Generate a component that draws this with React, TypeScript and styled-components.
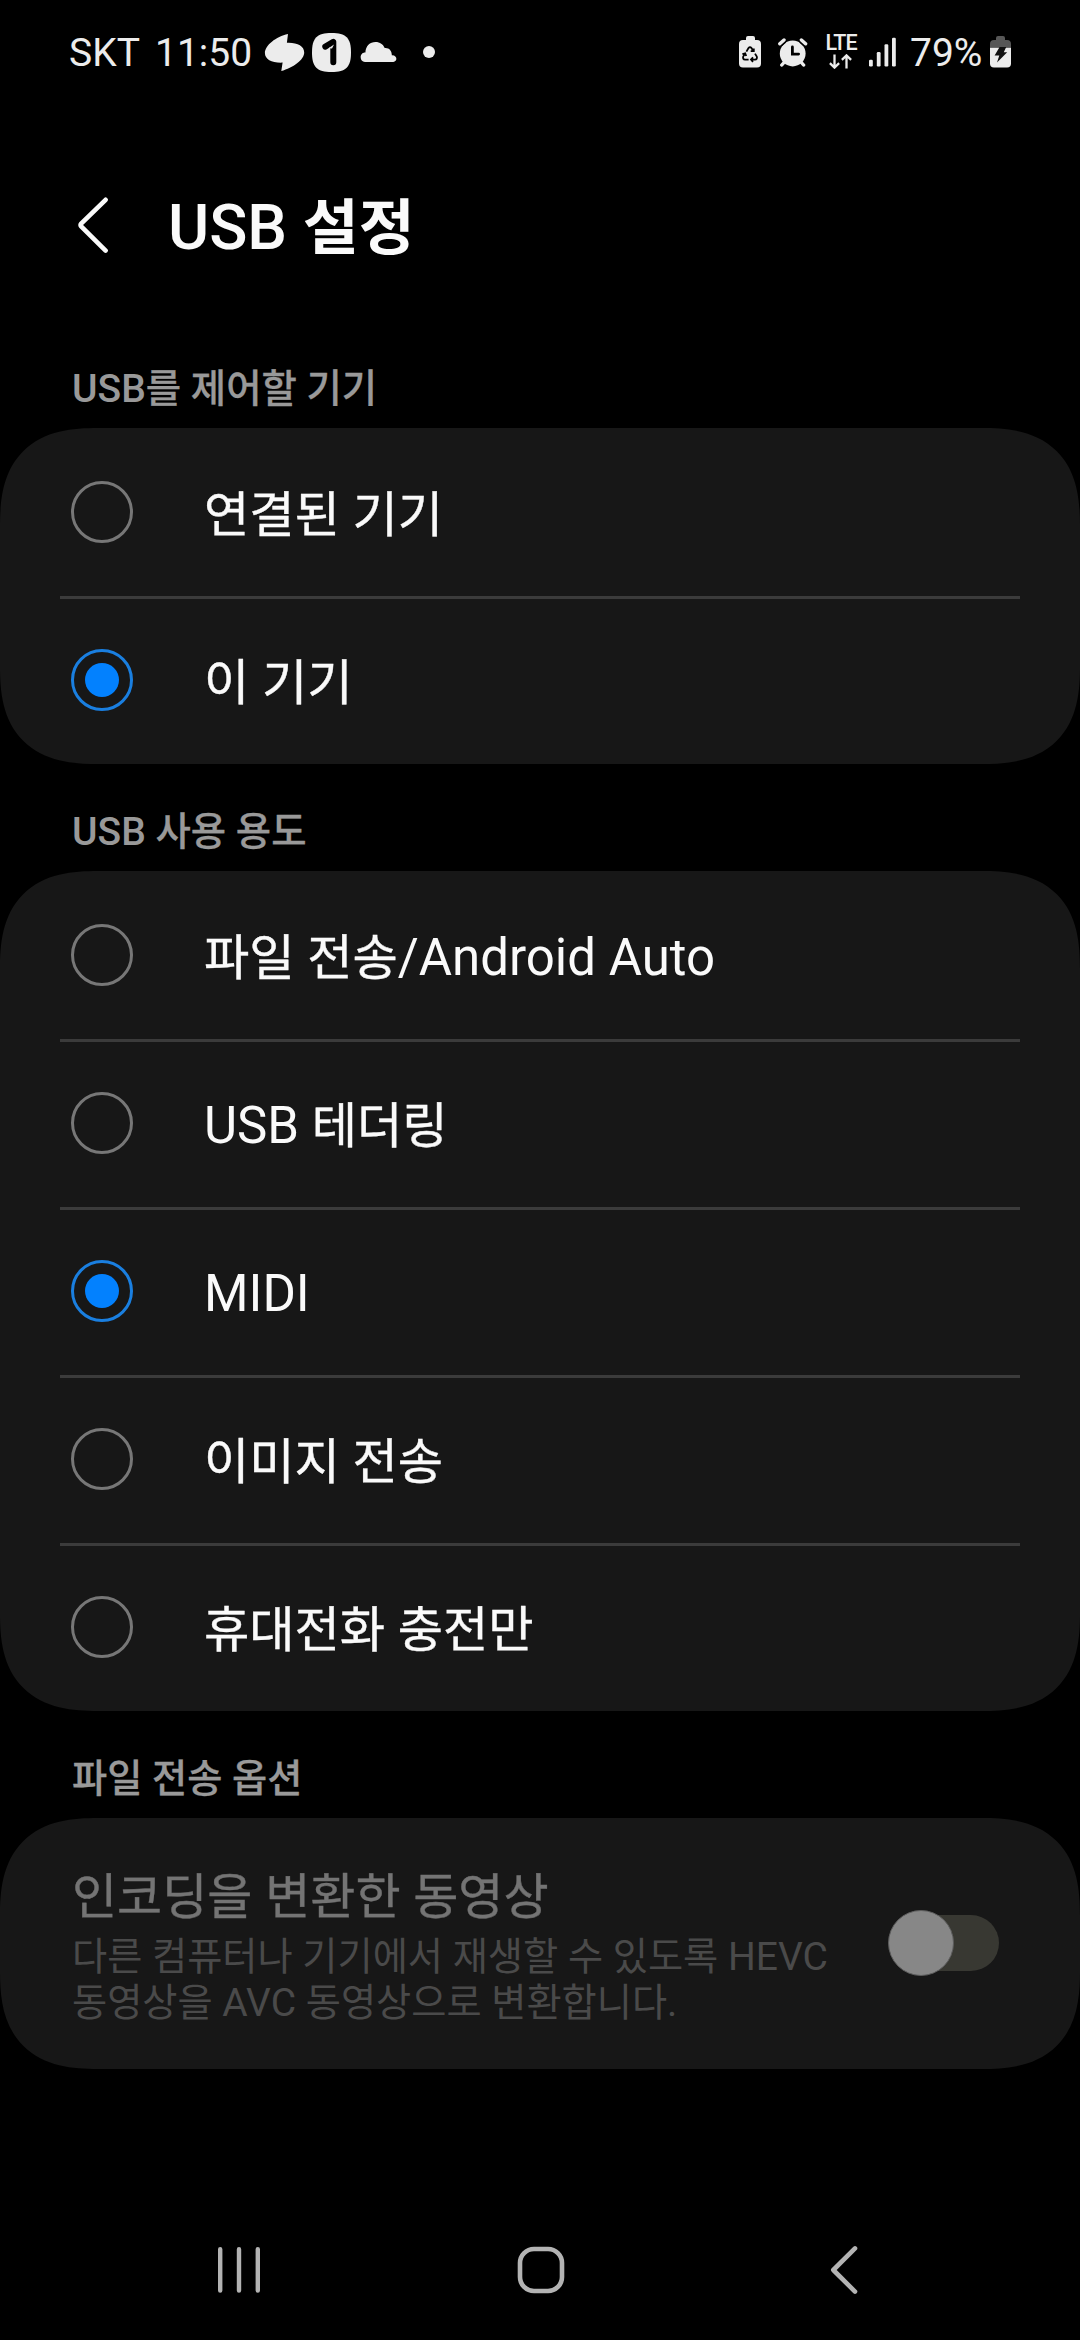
import React, { useState } from 'react';
import styled, { createGlobalStyle, css } from 'styled-components';

const GlobalStyle = createGlobalStyle`
  * { box-sizing: border-box; }
  body {
    margin: 0;
    background: #000;
    font-family: Roboto, "Noto Sans CJK KR", sans-serif;
  }
`;

const Screen = styled.div`
  display: flex;
  flex-direction: column;
  width: 1080px;
  height: 2340px;
  background: #000;
  color: #fafafa;
  overflow: hidden;
`;

const StatusBar = styled.header`
  display: flex;
  justify-content: space-between;
  align-items: center;
  height: 104px;
  padding: 0 69px 0 69px;
  color: #ececec;
  font-size: 39px;
  line-height: 46px;
`;

const StatusGroup = styled.div`
  display: flex;
  align-items: center;
`;

const StatusText = styled.span<{ $left?: number; $width: number }>`
  width: ${(p) => p.$width}px;
  margin-left: ${(p) => p.$left ?? 0}px;
  padding-top: 2px;
  white-space: nowrap;
`;

const StatusIcon = styled.svg<{ $left: number }>`
  display: block;
  flex: none;
  margin-left: ${(p) => p.$left}px;
`;

const Network = styled.div`
  display: flex;
  flex-direction: column;
  align-items: center;
  gap: 3px;
  width: 33px;
  margin-left: 16px;
`;

const NetworkLabel = styled.span`
  font-size: 21.5px;
  font-weight: 500;
  line-height: 16px;
  letter-spacing: -1px;
  margin-right: -1px;
`;

const TitleBar = styled.div`
  display: flex;
  align-items: center;
  gap: 57px;
  height: 242px;
  padding: 0 0 0 77px;
  margin-bottom: -25px;
`;

const IconButton = styled.button`
  display: flex;
  padding: 0;
  border: 0;
  background: none;
  color: inherit;
`;

const Korean = styled.span<{ $scale: number; $weight?: number; $stroke?: number }>`
  font-size: ${(p) => p.$scale}em;
  font-weight: ${(p) => p.$weight ?? 'inherit'};
  line-height: 0;
  -webkit-text-stroke: ${(p) => p.$stroke ?? 0}px currentColor;
`;

const Title = styled.h1`
  margin: 5px 0 0;
  font-size: 63px;
  line-height: 74px;
  font-weight: 500;
`;

const SectionLabel = styled.h2`
  height: 107px;
  margin: 0;
  padding: 45px 72px 0;
  color: #999;
  font-size: 39px;
  line-height: 46px;
  font-weight: 500;
`;

const Card = styled.section`
  border-radius: 78px;
  background: #171717;
  @supports (corner-shape: superellipse(1.4)) {
    border-radius: 98px;
    corner-shape: superellipse(1.36);
  }
`;

const OptionRow = styled.div`
  display: flex;
  align-items: center;
  gap: 71px;
  height: 168px;
  margin: 0 60px;
  padding-left: 11px;
  cursor: pointer;
  & + & {
    box-shadow: inset 0 3px 0 #3b3b3b;
  }
`;

const Radio = styled.span<{ $on: boolean }>`
  display: grid;
  place-items: center;
  width: 62px;
  height: 62px;
  border: 3px solid ${(p) => (p.$on ? '#1a7fe0' : '#777')};
  border-radius: 50%;
  ${(p) =>
    p.$on &&
    css`
      &::after {
        content: '';
        width: 34px;
        height: 34px;
        border-radius: 50%;
        background: #0381fe;
      }
    `}
`;

const OptionText = styled.span`
  padding-top: 5px;
  font-size: 51px;
  line-height: 60px;
`;

const SwitchRow = styled.div`
  display: flex;
  align-items: center;
  justify-content: space-between;
  height: 251px;
  padding: 0 81px 1px 72px;
`;

const SwitchTexts = styled.div`
  display: flex;
  flex-direction: column;
  gap: 7px;
  padding-top: 7px;
`;

const SwitchTitle = styled.span`
  color: #747474;
  font-size: 51px;
  line-height: 60px;
`;

const SwitchSummary = styled.span`
  color: #4a4a4a;
  font-size: 39px;
  line-height: 46px;
  white-space: nowrap;
`;

const Toggle = styled.span`
  display: flex;
  align-items: center;
  width: 108px;
  height: 56px;
  border-radius: 28px;
  background: #383832;
`;

const Thumb = styled.span`
  flex: none;
  width: 66px;
  height: 66px;
  margin-left: -3px;
  border: 1.5px solid #5c5c5c;
  border-radius: 50%;
  background: #878787;
`;

const NavBar = styled.nav`
  display: flex;
  align-items: center;
  justify-content: space-between;
  height: 140px;
  margin-top: auto;
  padding: 0 221px 0 217px;
  color: #b3b3b3;
`;

const HomeButton = styled(IconButton)`
  margin-right: 8px;
`;

interface MixedProps {
  text: string;
  scale?: number;
  weight?: number;
  stroke?: number;
}

/* Hangul is set slightly smaller than the Latin text beside it. */
const Mixed = ({ text, scale = 0.965, weight, stroke }: MixedProps) => (
  <>
    {text.split(/([\uac00-\ud7a3]+)/).map((part, i) =>
      i % 2 ? (
        <Korean key={i} $scale={scale} $weight={weight} $stroke={stroke}>
          {part}
        </Korean>
      ) : (
        part
      ),
    )}
  </>
);

const TalkIcon = () => (
  <StatusIcon $left={11} width="41" height="39" viewBox="0 0 41 39" fill="currentColor">
    <path d="M24 1 22.9 9.7C33 9.2 40.2 12.8 40.2 19.4 40.2 27 29 34.5 17.3 38L18.6 29.6C8 30 .9 26.5.9 20 .9 12.5 12 3.5 24 1Z" />
  </StatusIcon>
);

const OneIcon = () => (
  <StatusIcon $left={7} width="39" height="39" viewBox="0 0 39 39">
    <path
      d="M19.5 0C34 0 39 5 39 19.5S34 39 19.5 39 0 34 0 19.5 5 0 19.5 0Z"
      fill="currentColor"
    />
    <path
      d="M13.3 13.6 21.3 8.8V29.3"
      fill="none"
      stroke="#000"
      strokeWidth="6"
      strokeLinecap="round"
      strokeLinejoin="round"
    />
    <path d="M16.5 15.2 22 11.6 20 15.4Z" fill="currentColor" />
  </StatusIcon>
);

const CloudIcon = () => (
  <StatusIcon $left={9} width="37" height="22" viewBox="0 0 37 22" fill="currentColor">
    <path d="M5 20.9C-.8 20.9-.9 11.4 5.4 11.6 5.6 5 10 1 15.5 1 20 1 23.2 3.4 24.7 7 29 6.5 32 9.6 31.8 14.3 37.6 14 37.6 20.9 33.3 20.9Z" />
  </StatusIcon>
);

const DotIcon = () => (
  <StatusIcon $left={26} width="12" height="12" viewBox="0 0 12 12" fill="currentColor">
    <circle cx="6" cy="6" r="6" />
  </StatusIcon>
);

const RecycleBatteryIcon = () => (
  <StatusIcon $left={0} width="22" height="32" viewBox="0 0 22 32" fill="currentColor">
    <path d="M7 4V2Q7 0 9 0H14Q16 0 16 2V4H18Q22 4 22 8V27.6Q22 31.6 18 31.6H4Q0 31.6 0 27.6V8Q0 4 4 4Z" />
    <g fill="none" stroke="#000" strokeWidth="1.8">
      <path d="M7.4 15.6 9.5 12.1Q11 10.2 12.5 12.1L14.4 15.3M11.7 15.2H14.8V12.4" />
      <path d="M16 17.6 17.8 20.6Q18.6 23.4 15.9 23.6H12.4M14 21.4 12 23.6 14 25.8" />
      <path d="M9.6 23.6H6.1Q3.4 23.4 4.2 20.6L6 17.6M3.4 18.2 6.2 17.3 7.2 20" />
    </g>
  </StatusIcon>
);

const AlarmIcon = () => (
  <StatusIcon $left={17} width="30" height="29" viewBox="0 0 30 29">
    <circle cx="14.7" cy="15.5" r="12.9" fill="currentColor" />
    <g fill="none" stroke="currentColor" strokeWidth="3.4" strokeLinecap="round">
      <path d="M6 24.5 3.8 27M23.4 24.5 25.6 27" />
    </g>
    <path
      d="M1.8 6 6.2 2.1M23.2 2.1 27.6 6"
      fill="none"
      stroke="#000"
      strokeWidth="6.2"
      strokeLinecap="butt"
    />
    <path
      d="M1.8 5.8 6 2M23.4 2 27.6 5.8"
      fill="none"
      stroke="currentColor"
      strokeWidth="3.4"
      strokeLinecap="round"
    />
    <path d="M14.4 9V16.1H20.6" fill="none" stroke="#000" strokeWidth="2.8" strokeLinecap="round" />
  </StatusIcon>
);

const ArrowsIcon = () => (
  <svg width="23" height="15" viewBox="0 0 23 15" fill="none" stroke="currentColor" strokeWidth="2.3">
    <path d="M5.5.5V13.4M.9 9.2 5.5 13.6 10.1 9.2M17.5 14.5V1.6M12.9 5.8 17.5 1.4 22.1 5.8" />
  </svg>
);

const SignalIcon = () => (
  <StatusIcon $left={12} width="28" height="30" viewBox="0 0 28 30" fill="currentColor">
    <rect x="0" y="22.7" width="3.8" height="6.7" rx="1.2" />
    <rect x="7.8" y="15" width="3.8" height="14.4" rx="1.2" />
    <rect x="15.5" y="7.3" width="3.8" height="22.1" rx="1.2" />
    <rect x="23" y="0.7" width="3.8" height="28.7" rx="1.2" />
  </StatusIcon>
);

const ChargingBatteryIcon = () => (
  <StatusIcon $left={7} width="21" height="32" viewBox="0 0 21 32">
    <path
      d="M6 4V2Q6 0 8 0H13Q15 0 15 2V4H17Q21 4 21 8V11.8H0V8Q0 4 4 4Z"
      fill="#575757"
    />
    <path d="M0 11.8H21V27.6Q21 31.6 17 31.6H4Q0 31.6 0 27.6Z" fill="currentColor" />
    <path d="M9.6 11H16.2L13.8 16.3H17.2L7 26.6 9.3 19.6H4.6Z" fill="#111" />
  </StatusIcon>
);

const BackIcon = () => (
  <svg width="34" height="58" viewBox="0 0 34 58" fill="none" stroke="currentColor" strokeWidth="4.6" strokeLinecap="round">
    <path d="M28.6 3.8 4.2 27.6Q3 29 4.2 30.4L28.6 54.6" />
  </svg>
);

const RecentsIcon = () => (
  <svg width="44" height="48" viewBox="0 0 44 48" stroke="currentColor" strokeWidth="4.4" strokeLinecap="round">
    <path d="M3.2 3.2V44.5M22 3.2V44.5M40.8 3.2V44.5" />
  </svg>
);

const HomeIcon = () => (
  <svg width="48" height="48" viewBox="0 0 48 48" fill="none" stroke="currentColor" strokeWidth="4.6">
    <rect x="3" y="3" width="42" height="42" rx="14" />
  </svg>
);

const NavBackIcon = () => (
  <svg width="30" height="50" viewBox="0 0 30 50" fill="none" stroke="currentColor" strokeWidth="4.6" strokeLinecap="round" strokeLinejoin="round">
    <path d="M26 3.4 4.3 25 26 46.6" />
  </svg>
);

interface OptionListProps {
  options: string[];
  initial: number;
}

const OptionList = ({ options, initial }: OptionListProps) => {
  const [selected, setSelected] = useState(initial);
  return (
    <Card role="radiogroup">
      {options.map((label, i) => (
        <OptionRow key={label} role="radio" aria-checked={i === selected} onClick={() => setSelected(i)}>
          <Radio $on={i === selected} />
          <OptionText>
            <Mixed text={label} stroke={0.4} />
          </OptionText>
        </OptionRow>
      ))}
    </Card>
  );
};

export default function App() {
  return (
    <>
      <GlobalStyle />
      <Screen lang="ko">
        <StatusBar>
          <StatusGroup>
            <StatusText $width={71}>SKT</StatusText>
            <StatusText $left={15} $width={98}>11:50</StatusText>
            <TalkIcon />
            <OneIcon />
            <CloudIcon />
            <DotIcon />
          </StatusGroup>
          <StatusGroup>
            <RecycleBatteryIcon />
            <AlarmIcon />
            <Network>
              <NetworkLabel>LTE</NetworkLabel>
              <ArrowsIcon />
            </Network>
            <SignalIcon />
            <StatusText $left={13} $width={73}>79%</StatusText>
            <ChargingBatteryIcon />
          </StatusGroup>
        </StatusBar>

        <TitleBar>
          <IconButton aria-label="뒤로">
            <BackIcon />
          </IconButton>
          <Title>
            <Mixed text="USB 설정" weight={700} />
          </Title>
        </TitleBar>

        <SectionLabel>
          <Mixed text="USB를 제어할 기기" scale={0.985} stroke={0.3} />
        </SectionLabel>
        <OptionList options={['연결된 기기', '이 기기']} initial={1} />

        <SectionLabel>
          <Mixed text="USB 사용 용도" scale={0.985} stroke={0.3} />
        </SectionLabel>
        <OptionList
          options={['파일 전송/Android Auto', 'USB 테더링', 'MIDI', '이미지 전송', '휴대전화 충전만']}
          initial={2}
        />

        <SectionLabel>
          <Mixed text="파일 전송 옵션" scale={0.98} stroke={0.3} />
        </SectionLabel>
        <Card>
          <SwitchRow>
            <SwitchTexts>
              <SwitchTitle>
                <Mixed text="인코딩을 변환한 동영상" scale={0.962} stroke={0.4} />
              </SwitchTitle>
              <SwitchSummary>
                <Mixed text="다른 컴퓨터나 기기에서 재생할 수 있도록 HEVC" scale={0.98} />
                <br />
                <Mixed text="동영상을 AVC 동영상으로 변환합니다." scale={0.98} />
              </SwitchSummary>
            </SwitchTexts>
            <Toggle role="switch" aria-checked={false} aria-disabled>
              <Thumb />
            </Toggle>
          </SwitchRow>
        </Card>

        <NavBar>
          <IconButton aria-label="최근 앱">
            <RecentsIcon />
          </IconButton>
          <HomeButton aria-label="홈">
            <HomeIcon />
          </HomeButton>
          <IconButton aria-label="이전">
            <NavBackIcon />
          </IconButton>
        </NavBar>
      </Screen>
    </>
  );
}
